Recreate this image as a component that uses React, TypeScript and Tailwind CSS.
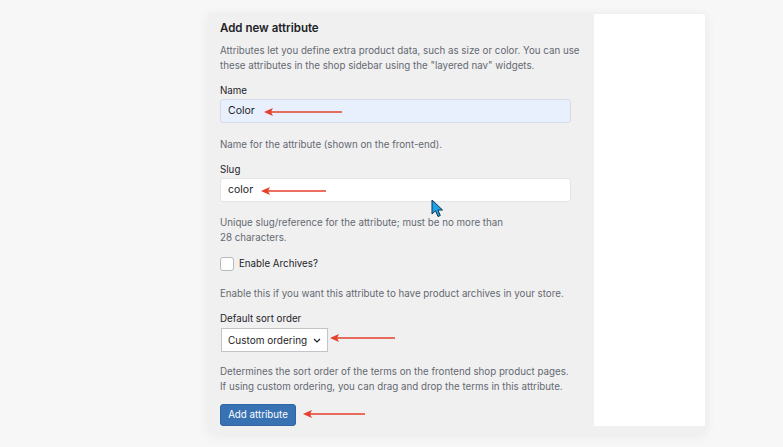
import React from "react";

function Arrow({ x, y, w }: { x: number; y: number; w: number }) {
  return (
    <svg
      className="absolute"
      style={{ left: x, top: y - 5 }}
      width={w}
      height={10}
      viewBox={`0 0 ${w} 10`}
    >
      <line x1={6} y1={5} x2={w} y2={5} stroke="#e5402b" strokeWidth={1.6} />
      <path d="M0 5 L9 1 L7 5 L9 9 Z" fill="#e5402b" />
    </svg>
  );
}

function Cursor() {
  return (
    <svg className="absolute" style={{ left: 431, top: 199 }} width={14} height={20} viewBox="0 0 14 20">
      <path
        d="M1 1 L1 15 L4.5 11.8 L7 17.5 L9.3 16.5 L6.9 11 L11.5 11 Z"
        fill="#1aa3e8"
        stroke="#10324a"
        strokeWidth={1}
        strokeLinejoin="round"
      />
    </svg>
  );
}

export default function App() {
  return (
    <div
      className="relative w-[783px] h-[447px] bg-[#f7f7f7] overflow-hidden pt-[13px] pl-[208px]"
      style={{ fontFamily: "Inter, 'Noto Sans', sans-serif" }}
    >
      <div className="flex w-[498px] h-[420px] bg-[#f0f0f1] shadow-[0_2px_12px_rgba(0,0,0,0.06)]">
        <div className="w-[386px] pl-3 pt-[7px] text-[#3c434a] whitespace-nowrap">
          <h2 className="text-[11.5px] font-semibold text-[#1d2327] leading-[16px]">Add new attribute</h2>
          <p className="mt-[7px] text-[9.75px] leading-[15px] text-[#646970]">
            Attributes let you define extra product data, such as size or color. You can use
            <br />
            these attributes in the shop sidebar using the "layered nav" widgets.
          </p>

          <div className="mt-[11px] text-[9.75px] leading-[14px] text-[#1d2327]">Name</div>
          <div className="mt-px w-[351px] h-[24px] rounded-[3px] border border-[#d5dbe3] bg-[#e8f0fe] flex items-center pl-[7px] text-[10.5px] text-[#1d2327]">
            Color
          </div>
          <p className="mt-[14px] text-[9.75px] leading-[15px] text-[#646970]">
            Name for the attribute (shown on the front-end).
          </p>

          <div className="mt-[11px] text-[9.75px] leading-[14px] text-[#1d2327]">Slug</div>
          <div className="mt-px w-[351px] h-[24px] rounded-[3px] border border-[#e2e4e7] bg-white flex items-center pl-[7px] text-[10.5px] text-[#1d2327]">
            color
          </div>
          <p className="mt-[13px] text-[9.75px] leading-[15px] text-[#646970]">
            Unique slug/reference for the attribute; must be no more than
            <br />
            28 characters.
          </p>

          <div className="mt-[12px] h-[14px] flex items-center gap-[5px]">
            <span className="w-[14px] h-[14px] rounded-[3px] border border-[#b4b9be] bg-white" />
            <span className="text-[9.75px] text-[#1d2327]">Enable Archives?</span>
          </div>
          <p className="mt-[15px] text-[9.75px] leading-[15px] text-[#646970]">
            Enable this if you want this attribute to have product archives in your store.
          </p>

          <div className="mt-[11px] text-[9.75px] leading-[14px] text-[#1d2327]">Default sort order</div>
          <div className="mt-[2px] ml-px w-[107px] h-[24px] border border-[#c3c4c7] bg-white flex items-center justify-between pl-[6px] pr-[6px] text-[10px] text-[#1d2327]">
            <span>Custom ordering</span>
            <svg width="8" height="5" viewBox="0 0 8 5">
              <path d="M1 1 L4 4 L7 1" fill="none" stroke="#1d2327" strokeWidth="1.2" />
            </svg>
          </div>
          <p className="mt-[12px] text-[9.75px] leading-[15px] text-[#646970]">
            Determines the sort order of the terms on the frontend shop product pages.
            <br />
            If using custom ordering, you can drag and drop the terms in this attribute.
          </p>

          <button className="mt-[10px] w-[76px] h-[22px] rounded-[3px] bg-[#3872b2] text-white text-[9.75px] border border-[#2f65a3]">
            Add attribute
          </button>
        </div>
        <div className="w-[111px] h-[412px] mt-px bg-white" />
      </div>

      <Arrow x={264} y={112} w={78} />
      <Arrow x={261} y={191} w={65} />
      <Arrow x={330} y={338} w={65} />
      <Arrow x={303} y={414} w={62} />
      <Cursor />
    </div>
  );
}
